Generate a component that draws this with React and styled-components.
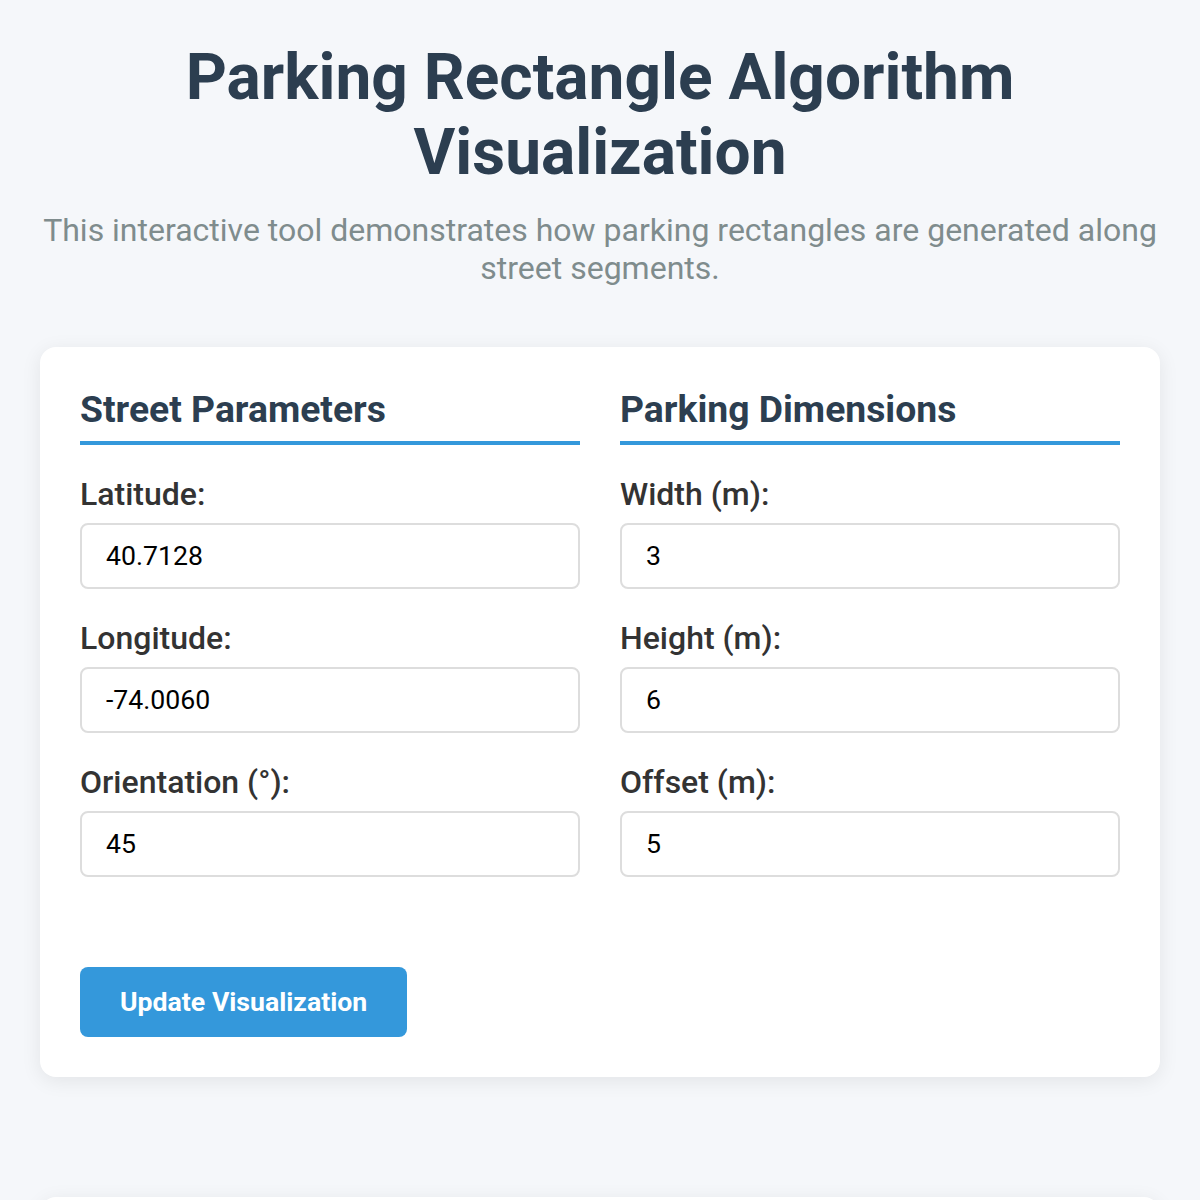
import React from 'react';
import styled, { createGlobalStyle } from 'styled-components';

const GlobalStyle = createGlobalStyle`
  body {
    margin: 0;
    background: #f5f7fa;
    font-family: Roboto, "Liberation Sans", sans-serif;
  }
`;

const Page = styled.div`
  padding: 40px;
  display: flex;
  flex-direction: column;
`;

const Title = styled.h1`
  margin: 0 0 21px;
  text-align: center;
  font-size: 64px;
  font-weight: 700;
  line-height: normal;
  color: #2c3e50;
`;

const Intro = styled.p`
  margin: 0 0 60px;
  text-align: center;
  font-size: 32px;
  line-height: normal;
  color: #7f8c8d;
`;

const Card = styled.div`
  background: #fff;
  border-radius: 16px;
  box-shadow: 0 4px 20px rgba(0, 0, 0, 0.08);
  padding: 40px;
  margin-bottom: ${p => p.$gap || 0}px;
  min-height: ${p => p.$minHeight || 0}px;
`;

const Columns = styled.div`
  display: grid;
  grid-template-columns: 1fr 1fr;
  gap: 40px;
`;

const Section = styled.div`
  display: flex;
  flex-direction: column;
`;

const SectionTitle = styled.h2`
  margin: 0 0 30px;
  padding-bottom: 10px;
  border-bottom: 4px solid #3498db;
  font-size: 37.3px;
  font-weight: 700;
  line-height: 44px;
  color: #2c3e50;
`;

const Field = styled.div`
  display: flex;
  flex-direction: column;
  margin-bottom: 30px;
`;

const Label = styled.label`
  display: block;
  margin-bottom: 10px;
  font-size: 32px;
  font-weight: 500;
  line-height: 38px;
  color: #333;
`;

const Input = styled.input`
  box-sizing: border-box;
  width: 100%;
  height: 66px;
  padding: 0 24px;
  border: 2px solid #ddd;
  border-radius: 8px;
  background: #fff;
  font-family: Roboto, "Liberation Sans", sans-serif;
  font-size: 26.67px;
  color: #000;
  outline: none;
`;

const Button = styled.button`
  align-self: flex-start;
  margin-top: 60px;
  height: 70px;
  padding: 0 40px;
  border: none;
  border-radius: 8px;
  background: #3498db;
  color: #fff;
  font-family: Roboto, "Liberation Sans", sans-serif;
  font-size: 26.67px;
  font-weight: 700;
  cursor: pointer;
`;

const Controls = styled.div`
  display: flex;
  flex-direction: column;
`;

const street = [
  { label: 'Latitude:', value: '40.7128' },
  { label: 'Longitude:', value: '-74.0060' },
  { label: 'Orientation (°):', value: '45' },
];

const parking = [
  { label: 'Width (m):', value: '3' },
  { label: 'Height (m):', value: '6' },
  { label: 'Offset (m):', value: '5' },
];

const FieldList = ({ title, fields }) => (
  <Section>
    <SectionTitle>{title}</SectionTitle>
    {fields.map(f => (
      <Field key={f.label}>
        <Label>{f.label}</Label>
        <Input type="text" defaultValue={f.value} />
      </Field>
    ))}
  </Section>
);

const App = () => {
  return (
    <>
      <GlobalStyle />
      <Page>
        <Title>Parking Rectangle Algorithm Visualization</Title>
        <Intro>
          This interactive tool demonstrates how parking rectangles are generated along street segments.
        </Intro>
        <Card $gap={120}>
          <Controls>
            <Columns>
              <FieldList title="Street Parameters" fields={street} />
              <FieldList title="Parking Dimensions" fields={parking} />
            </Columns>
            <Button>Update Visualization</Button>
          </Controls>
        </Card>
        <Card $minHeight={400} />
      </Page>
    </>
  );
};

export default App;
